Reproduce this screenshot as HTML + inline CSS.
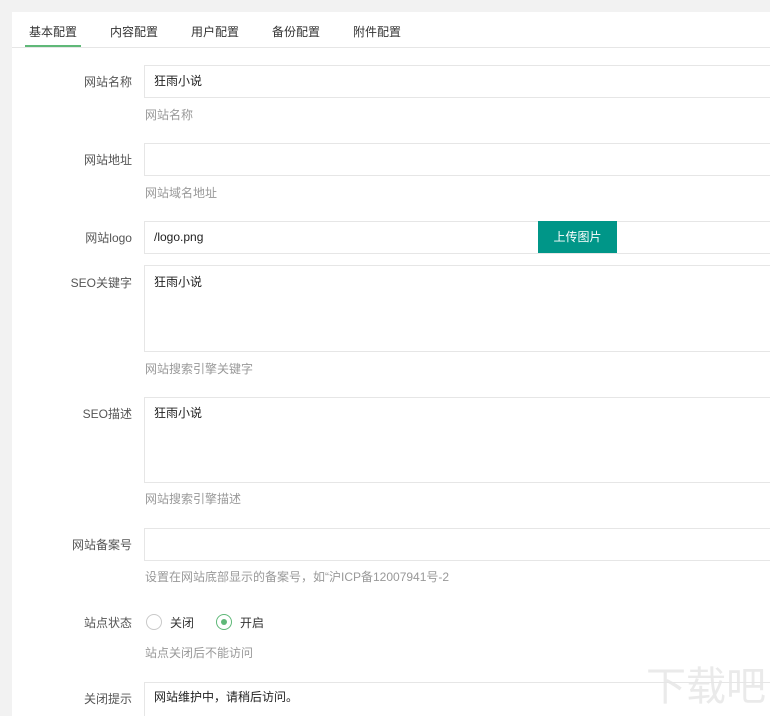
<!DOCTYPE html>
<html style="width:770px;height:716px;overflow:hidden"><head><meta charset="utf-8"><style>
*{margin:0;padding:0;box-sizing:border-box}
body{width:770px;height:716px;background:#f2f2f2;font-family:"Liberation Sans","Noto Sans CJK SC",sans-serif;font-size:12px;color:#333;overflow:hidden;position:relative}
.panel{position:absolute;left:12px;top:12px;width:758px;height:704px;background:#fff}
.tabs{position:absolute;left:12px;top:12px;width:758px;height:36px;border-bottom:1px solid #e6e6e6}
.tab{position:absolute;top:11px;color:#333}
.act{position:absolute;left:25px;top:45px;width:56px;height:2px;background:#5FB878}
.lab{position:absolute;right:638px;color:#555;white-space:nowrap}
.in{position:absolute;left:144px;width:626px;border:1px solid #e6e6e6;border-right:none;background:#fff;padding:0 9px;color:#222}
.help{position:absolute;left:145px;color:#999}
.btn{position:absolute;left:538px;top:221px;width:79px;height:32px;background:#009688;color:#fff;text-align:center;line-height:32px}
.radio{position:absolute;top:614px;width:16px;height:16px;border:1px solid #c9c9c9;border-radius:50%}
.wm{position:absolute;right:4px;bottom:4px;color:#e6e6e6;font-size:40px;opacity:.8}
</style></head><body>
<div class="panel"></div>
<div class="tabs"></div>
<div class="tab" style="left:29px;top:23px">基本配置</div>
<div class="tab" style="left:110px;top:23px">内容配置</div>
<div class="tab" style="left:191px;top:23px">用户配置</div>
<div class="tab" style="left:272px;top:23px">备份配置</div>
<div class="tab" style="left:353px;top:23px">附件配置</div>
<div class="act"></div>

<div class="lab" style="top:73px">网站名称</div>
<div class="in" style="top:65px;height:33px;line-height:31px">狂雨小说</div>
<div class="help" style="top:106px">网站名称</div>

<div class="lab" style="top:151px">网站地址</div>
<div class="in" style="top:143px;height:33px"></div>
<div class="help" style="top:184px">网站域名地址</div>

<div class="lab" style="top:229px">网站logo</div>
<div class="in" style="top:221px;height:33px;line-height:31px">/logo.png</div>
<div class="btn">上传图片</div>

<div class="lab" style="top:274px">SEO关键字</div>
<div class="in" style="top:265px;height:87px;padding-top:7px">狂雨小说</div>
<div class="help" style="top:360px">网站搜索引擎关键字</div>

<div class="lab" style="top:405px">SEO描述</div>
<div class="in" style="top:397px;height:86px;padding-top:6px">狂雨小说</div>
<div class="help" style="top:490px">网站搜索引擎描述</div>

<div class="lab" style="top:536px">网站备案号</div>
<div class="in" style="top:528px;height:33px"></div>
<div class="help" style="top:568px">设置在网站底部显示的备案号，如“沪ICP备12007941号-2</div>

<div class="lab" style="top:614px">站点状态</div>
<div class="radio" style="left:146px"></div>
<div style="position:absolute;left:170px;top:614px">关闭</div>
<div class="radio" style="left:216px;border-color:#5FB878"><div style="position:absolute;left:4px;top:4px;width:6px;height:6px;border-radius:50%;background:#5FB878"></div></div>
<div style="position:absolute;left:240px;top:614px">开启</div>
<div class="help" style="top:644px">站点关闭后不能访问</div>

<div class="lab" style="top:690px">关闭提示</div>
<div class="in" style="top:682px;height:40px;padding-top:5px">网站维护中，请稍后访问。</div>
<div class="wm">下载吧</div>
</body></html>
